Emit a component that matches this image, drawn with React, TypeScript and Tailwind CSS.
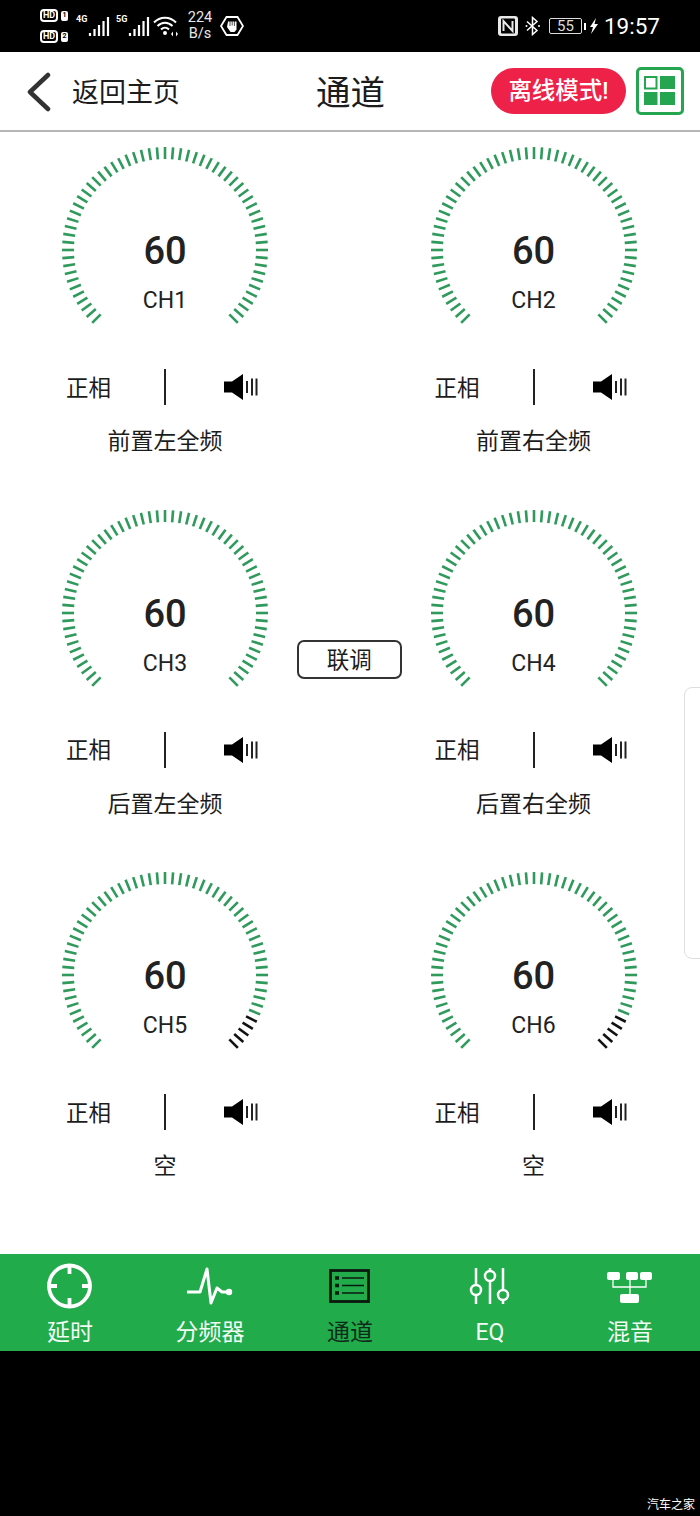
const CJK = "font-['Roboto','Noto_Sans_CJK_SC',sans-serif]";

function Gauge({ value, name, dark = 0 }: { value: string; name: string; dark?: number }) {
  const ticks = Array.from({ length: 61 }, (_, i) => {
    const a = ((225 - i * 4.5) * Math.PI) / 180;
    return {
      x1: 105 + 103 * Math.cos(a),
      y1: 105 - 103 * Math.sin(a),
      x2: 105 + 91 * Math.cos(a),
      y2: 105 - 91 * Math.sin(a),
      black: i >= 61 - dark,
    };
  });
  return (
    <div className="relative h-[182px] w-[210px]">
      <svg width="210" height="182" viewBox="0 0 210 182" className="block">
        {ticks.map((t, i) => (
          <line key={i} x1={t.x1} y1={t.y1} x2={t.x2} y2={t.y2} stroke={t.black ? "#111111" : "#2f9a5c"} strokeWidth="2.600" />
        ))}
      </svg>
      <div className="absolute inset-x-0 top-[83px] text-center text-[38px] leading-[46px] font-medium text-[#222222]">{value}</div>
      <div className="absolute inset-x-0 top-[140px] text-center text-[23px] leading-[32px] text-[#222222]">{name}</div>
    </div>
  );
}

function Channel({ value, name, label, dark }: { value: string; name: string; label: string; dark?: number }) {
  return (
    <div className="w-[210px]">
      <Gauge value={value} name={name} dark={dark} />
      <div className="mt-[42px] flex h-[36px] items-center">
        <span className="ml-[6px] w-[98px] pt-[1px] text-[22.500px] leading-[36px] text-[#1c1c1c]">正相</span>
        <span className="h-[36px] w-[2px] bg-[#222222]" />
        <svg width="36" height="26" viewBox="0 0 36 26" className="ml-[57px] shrink-0">
          <path d="M1 7.500h8L20 0v26L9 18.500H1z" fill="#000000" />
          <path d="M24 7v12M29 4.500v17M33.500 4.500v17" stroke="#222222" strokeWidth="2" fill="none" />
        </svg>
      </div>
      <div className="mt-[20px] text-center text-[23px] leading-[34px] text-[#1c1c1c]">{label}</div>
    </div>
  );
}

function Tab({ label, children, active }: { label: string; children: React.ReactNode; active?: boolean }) {
  return (
    <div className="flex w-[140px] flex-col items-center">
      <svg width="60" height="50" viewBox="0 0 60 50" className="block">
        {children}
      </svg>
      <span className={`mt-[5px] text-[23px] leading-[34px] ${active ? "text-[#0f2a18]" : "text-[#f2fbf4]"}`}>{label}</span>
    </div>
  );
}

function StatusBar() {
  return (
    <div className="flex h-[52px] items-center justify-between bg-black pl-[40px] pr-[40px] text-white">
      <div className="flex items-center">
        <div className="flex w-[30px] flex-col gap-[8px]">
          {["1", "2"].map((n) => (
            <div key={n} className="flex items-center gap-[3px]">
              <span className="flex h-[13px] w-[18px] items-center justify-center rounded-[4px] border-2 border-white text-[9px] leading-none font-bold">HD</span>
              <span className="flex h-[10px] w-[7px] items-center justify-center rounded-[2px] bg-white text-[7px] leading-none font-bold text-black">{n}</span>
            </div>
          ))}
        </div>
        {["4G", "5G"].map((g) => (
          <div key={g} className="relative ml-[6px] h-[24px] w-[34px] shrink-0">
            <span className="absolute left-0 top-0 text-[9px] leading-[10px] font-bold">{g}</span>
            <svg width="34" height="24" viewBox="0 0 34 24" className="absolute left-0 top-0">
              <path d="M14 19v3M18.500 15v7M23 11v11M27.500 7v15M32 3v19" stroke="#ffffff" strokeWidth="2.200" fill="none" />
            </svg>
          </div>
        ))}
        <svg width="26" height="22" viewBox="0 0 26 22" className="ml-[3px] shrink-0">
          <path d="M1 7.500C7 1 17 1 23 7.500M4.500 11C9 6.500 15 6.500 19.500 11M8 14.500c2.500-2.500 5.500-2.500 8 0" stroke="#ffffff" strokeWidth="2" fill="none" />
          <circle cx="12" cy="18" r="2" fill="#ffffff" />
          <path d="M18 19l2-2.500v5zM25 19l-2-2.500v5z" fill="#ffffff" />
        </svg>
        <div className="ml-[6px] flex w-[30px] flex-col items-center text-[14.500px] leading-[16px] text-[#e8e8e8]">
          <span>224</span>
          <span>B/s</span>
        </div>
        <svg width="24" height="20" viewBox="0 0 24 20" className="ml-[5px] shrink-0">
          <path d="M6.500 1h11L23 10l-5.500 9h-11L1 10z" fill="none" stroke="#ffffff" strokeWidth="1.800" />
          <path d="M8 5.500h8.500v8l-2 2.500h-4L7 11z" fill="#ffffff" />
          <path d="M10 5v5M12.200 4.500v5M14.400 5v5" stroke="#000000" strokeWidth="0.700" />
        </svg>
      </div>
      <div className="flex items-center">
        <svg width="20" height="20" viewBox="0 0 20 20" className="shrink-0">
          <rect x="0" y="0" width="20" height="20" rx="3" fill="#e8e8e8" />
          <rect x="3" y="2.500" width="14" height="15" rx="1" fill="#000000" />
          <path d="M5.500 15V5l9 10V5" stroke="#e8e8e8" strokeWidth="2" fill="none" />
        </svg>
        <svg width="16" height="20" viewBox="0 0 16 20" className="ml-[7px] shrink-0">
          <path d="M2 5.500l10 9L7.500 18.500V1.500L12 5.500l-10 9" stroke="#ffffff" strokeWidth="1.500" fill="none" />
          <circle cx="1.500" cy="10" r="1" fill="#ffffff" />
          <circle cx="14" cy="10" r="1" fill="#ffffff" />
        </svg>
        <div className="ml-[8px] flex h-[16px] w-[33px] items-center justify-center rounded-[2px] border border-[#dddddd] text-[15px] leading-none text-[#dddddd]">55</div>
        <span className="ml-[2px] h-[7px] w-[2px] bg-white" />
        <svg width="10" height="16" viewBox="0 0 10 16" className="ml-[3px] shrink-0">
          <path d="M7 0L1 9h3l-2 7 7-10H5.500z" fill="#ffffff" />
        </svg>
        <span className="ml-[5px] text-[22.500px] leading-none">19:57</span>
      </div>
    </div>
  );
}

export default function App() {
  return (
    <div className={`relative h-[1516px] w-[700px] overflow-hidden bg-black ${CJK}`}>
      <StatusBar />
      <div className="flex h-[80px] items-center border-b-2 border-[#b5b5b5] bg-white">
        <svg width="28" height="40" viewBox="0 0 28 40" className="ml-[25px] mt-[2px] shrink-0">
          <path d="M23 3L5 20l18 17" stroke="#333333" strokeWidth="4.500" fill="none" strokeLinecap="round" strokeLinejoin="round" />
        </svg>
        <span className="ml-[19px] mt-[3px] w-[108px] whitespace-nowrap text-[27px] leading-[40px] text-[#1c1c1c]">返回主页</span>
        <span className="ml-[136px] mt-[3px] w-[70px] whitespace-nowrap text-[34.500px] leading-[48px] text-[#1c1c1c]">通道</span>
        <span className="ml-[105px] flex h-[46px] w-[135px] items-center justify-center rounded-full bg-[#ee2148] pt-[2px] text-[23.500px] leading-none font-medium whitespace-nowrap text-white">离线模式!</span>
        <span className="ml-[10px] flex h-[48px] w-[48px] shrink-0 items-center justify-center rounded-[5px] border-[3px] border-[#25a550]">
          <svg width="32" height="30" viewBox="0 0 32 30">
            <rect x="1" y="1" width="11.500" height="11.500" fill="none" stroke="#25a550" strokeWidth="2" />
            <rect x="16" y="0" width="15" height="13" fill="#25a550" />
            <rect x="0" y="16" width="13.500" height="13" fill="#25a550" />
            <rect x="16" y="16" width="15" height="13" fill="#25a550" />
          </svg>
        </span>
      </div>
      <div className="h-[1122px] bg-white pl-[60px] pt-[13px]">
        <div className="grid grid-cols-[210px_158.500px_210px] grid-rows-[362.500px_362.500px_362.500px]">
          <Channel value="60" name="CH1" label="前置左全频" />
          <div />
          <Channel value="60" name="CH2" label="前置右全频" />
          <Channel value="60" name="CH3" label="后置左全频" />
          <div className="flex justify-center pt-[132px]">
            <span className="flex h-[39px] w-[105px] items-center justify-center rounded-[7px] border-2 border-[#333333] pt-[2px] text-[22.500px] leading-none text-[#1c1c1c]">联调</span>
          </div>
          <Channel value="60" name="CH4" label="后置右全频" />
          <Channel value="60" name="CH5" label="空" dark={5} />
          <div />
          <Channel value="60" name="CH6" label="空" dark={5} />
        </div>
      </div>
      <div className="flex h-[97px] items-start bg-[#21ab4b] pt-[7px]">
        <Tab label="延时">
          <circle cx="29.500" cy="25" r="20.500" fill="none" stroke="#ffffff" strokeWidth="3.800" />
          <path d="M29.500 5v8M29.500 37v8M9 25h8M42 25h8" stroke="#ffffff" strokeWidth="3.800" />
        </Tab>
        <Tab label="分频器">
          <path d="M7 31h13l7-23 4 34 6-15 5 4h8" fill="none" stroke="#ffffff" strokeWidth="3" strokeLinejoin="round" />
          <circle cx="49" cy="31" r="3.200" fill="#ffffff" />
        </Tab>
        <Tab label="通道" active>
          <rect x="10.500" y="9.500" width="38" height="31" fill="none" stroke="#0b1a10" strokeWidth="2.800" />
          <path d="M15 17h4M15 24.500h4M15 32h4" stroke="#0b1a10" strokeWidth="3.500" />
          <path d="M22 17h22M22 24.500h22M22 32h22" stroke="#0b1a10" strokeWidth="1.300" />
        </Tab>
        <Tab label="EQ">
          <g fill="none" stroke="#ffffff" strokeWidth="2.500">
            <path d="M16 7v17M16 34v9M30 7v3M30 20v23M43 7v22M43 39v4" />
            <circle cx="16" cy="29" r="5" />
            <circle cx="30" cy="15" r="5" />
            <circle cx="43" cy="34" r="5" />
          </g>
        </Tab>
        <Tab label="混音">
          <g fill="#ffffff">
            <rect x="7" y="11" width="13" height="8" rx="2" />
            <rect x="26" y="11" width="12" height="8" rx="2" />
            <rect x="40" y="11" width="12" height="8" rx="2" />
            <rect x="20" y="33" width="19" height="9" rx="2" />
          </g>
          <path d="M13 19v7h33v-7M30 19v14" fill="none" stroke="#ffffff" strokeWidth="1.300" />
        </Tab>
      </div>
      <div className="absolute left-[684px] top-[687px] h-[272px] w-[24px] rounded-[8px] border border-[#dedede] bg-white" />
      <span className="absolute right-[5px] bottom-[3px] text-[12px] leading-[16px] text-white">汽车之家</span>
    </div>
  );
}
